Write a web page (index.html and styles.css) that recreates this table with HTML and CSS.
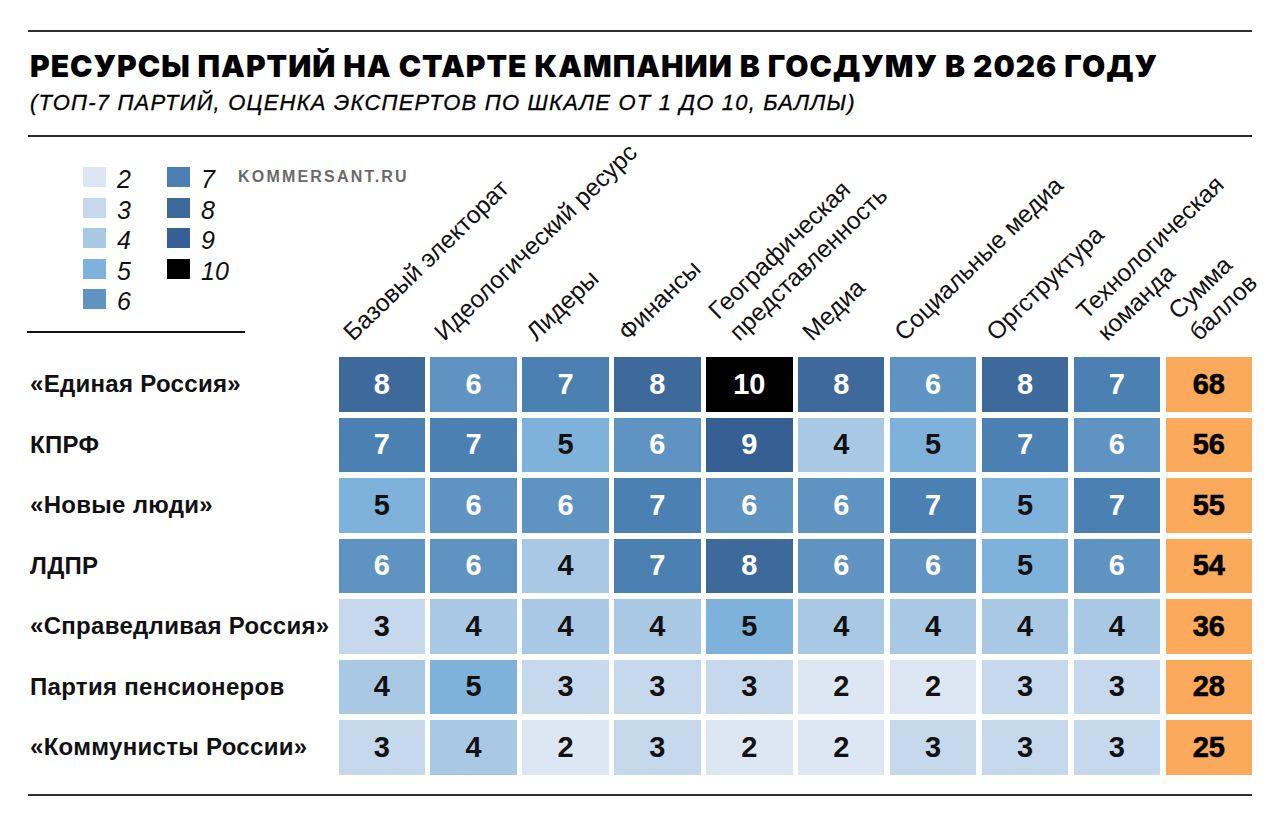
FILE: index.html
```html
<!DOCTYPE html>
<html lang="ru">
<head>
<meta charset="utf-8">
<title>Ресурсы партий</title>
<link rel="stylesheet" href="styles.css">
</head>
<body>
<div class="page">
  <div class="rule rule-top"></div>
  <h1 class="title">РЕСУРСЫ ПАРТИЙ НА СТАРТЕ КАМПАНИИ В ГОСДУМУ В 2026 ГОДУ</h1>
  <p class="subtitle">(ТОП-7 ПАРТИЙ, ОЦЕНКА ЭКСПЕРТОВ ПО ШКАЛЕ ОТ 1 ДО 10, БАЛЛЫ)</p>
  <div class="rule rule-mid"></div>

  <div class="grid head">
    <div class="legend-cell">
      <div class="legend-top">
        <div class="legend">
          <div class="lg-item"><span class="sw c2"></span><span class="lg-num">2</span></div>
          <div class="lg-item"><span class="sw c7"></span><span class="lg-num">7</span></div>
          <div class="lg-item"><span class="sw c3"></span><span class="lg-num">3</span></div>
          <div class="lg-item"><span class="sw c8"></span><span class="lg-num">8</span></div>
          <div class="lg-item"><span class="sw c4"></span><span class="lg-num">4</span></div>
          <div class="lg-item"><span class="sw c9"></span><span class="lg-num">9</span></div>
          <div class="lg-item"><span class="sw c5"></span><span class="lg-num">5</span></div>
          <div class="lg-item"><span class="sw c10"></span><span class="lg-num">10</span></div>
          <div class="lg-item"><span class="sw c6"></span><span class="lg-num">6</span></div>
        </div>
        <div class="brand">KOMMERSANT.RU</div>
      </div>
      <div class="legend-line"></div>
    </div>
    <div class="hd"><div class="hd-text">Базовый электорат</div></div>
    <div class="hd"><div class="hd-text">Идеологический ресурс</div></div>
    <div class="hd"><div class="hd-text">Лидеры</div></div>
    <div class="hd"><div class="hd-text">Финансы</div></div>
    <div class="hd hd-2"><div class="hd-text">Географическая<br>представленность</div></div>
    <div class="hd"><div class="hd-text">Медиа</div></div>
    <div class="hd"><div class="hd-text">Социальные медиа</div></div>
    <div class="hd"><div class="hd-text">Оргструктура</div></div>
    <div class="hd hd-2"><div class="hd-text">Технологическая<br>команда</div></div>
    <div class="hd hd-2"><div class="hd-text">Сумма<br>баллов</div></div>
  </div>

  <div class="grid body">
    <div class="label">«Единая Россия»</div>
    <div class="cell c8">8</div><div class="cell c6">6</div><div class="cell c7">7</div><div class="cell c8">8</div><div class="cell c10">10</div><div class="cell c8">8</div><div class="cell c6">6</div><div class="cell c8">8</div><div class="cell c7">7</div><div class="sum">68</div>

    <div class="label">КПРФ</div>
    <div class="cell c7">7</div><div class="cell c7">7</div><div class="cell c5">5</div><div class="cell c6">6</div><div class="cell c9">9</div><div class="cell c4">4</div><div class="cell c5">5</div><div class="cell c7">7</div><div class="cell c6">6</div><div class="sum">56</div>

    <div class="label">«Новые люди»</div>
    <div class="cell c5">5</div><div class="cell c6">6</div><div class="cell c6">6</div><div class="cell c7">7</div><div class="cell c6">6</div><div class="cell c6">6</div><div class="cell c7">7</div><div class="cell c5">5</div><div class="cell c7">7</div><div class="sum">55</div>

    <div class="label">ЛДПР</div>
    <div class="cell c6">6</div><div class="cell c6">6</div><div class="cell c4">4</div><div class="cell c7">7</div><div class="cell c8">8</div><div class="cell c6">6</div><div class="cell c6">6</div><div class="cell c5">5</div><div class="cell c6">6</div><div class="sum">54</div>

    <div class="label">«Справедливая Россия»</div>
    <div class="cell c3">3</div><div class="cell c4">4</div><div class="cell c4">4</div><div class="cell c4">4</div><div class="cell c5">5</div><div class="cell c4">4</div><div class="cell c4">4</div><div class="cell c4">4</div><div class="cell c4">4</div><div class="sum">36</div>

    <div class="label">Партия пенсионеров</div>
    <div class="cell c4">4</div><div class="cell c5">5</div><div class="cell c3">3</div><div class="cell c3">3</div><div class="cell c3">3</div><div class="cell c2">2</div><div class="cell c2">2</div><div class="cell c3">3</div><div class="cell c3">3</div><div class="sum">28</div>

    <div class="label">«Коммунисты России»</div>
    <div class="cell c3">3</div><div class="cell c4">4</div><div class="cell c2">2</div><div class="cell c3">3</div><div class="cell c2">2</div><div class="cell c2">2</div><div class="cell c3">3</div><div class="cell c3">3</div><div class="cell c3">3</div><div class="sum">25</div>
  </div>

  <div class="rule rule-bottom"></div>
</div>
</body>
</html>
```
FILE: styles.css
```css
body {
  margin: 0;
  background: #fff;
  color: #000;
  font-family: "Liberation Sans", Arial, sans-serif;
}

.page {
  padding: 30px 28px 0 28px;
}

.rule {
  background: #2e2e2e;
  height: 2px;
}

.title {
  margin: 16px 0 0 2px;
  font-family: Inter, "Liberation Sans", sans-serif;
  font-weight: 900;
  font-size: 30px;
  line-height: 36px;
  letter-spacing: 1px;
  white-space: nowrap;
}

.subtitle {
  margin: 6px 0 0 2px;
  font-family: "Liberation Sans Narrow", "Liberation Sans", sans-serif;
  font-style: italic;
  font-size: 22px;
  line-height: 26px;
  letter-spacing: 1.2px;
  white-space: nowrap;
  -webkit-text-stroke: 0.3px #000;
}

.rule-mid {
  margin-top: 19px;
}

.grid {
  display: grid;
  grid-template-columns: 305px repeat(10, 1fr);
  column-gap: 5.5px;
}

.head {
  height: 210px;
}

.legend-cell {
  padding-top: 30px;
  display: flex;
  flex-direction: column;
}

.legend-top {
  display: flex;
  align-items: flex-start;
  white-space: nowrap;
}

.legend {
  display: grid;
  grid-template-columns: 84px 71px;
  grid-auto-rows: 30.5px;
  margin-left: 55px;
}

.lg-item {
  display: flex;
  align-items: flex-start;
  gap: 11px;
}

.sw {
  width: 23px;
  height: 20px;
  flex: none;
}

.lg-num {
  font-family: "Liberation Sans Narrow", "Liberation Sans", sans-serif;
  font-style: italic;
  font-size: 25px;
  line-height: 20px;
  margin-top: 2px;
  color: #111;
}

.brand {
  font-family: "Liberation Sans", Arial, sans-serif;
  font-weight: 700;
  font-size: 16px;
  letter-spacing: 2.2px;
  color: #6a6a6a;
  line-height: 18px;
  margin-top: 1px;
}

.legend-line {
  width: 218px;
  height: 2px;
  background: #111;
  margin: 11px 0 0 -1px;
}

.hd {
  display: flex;
  align-items: flex-end;
  padding-left: 19px;
  min-width: 0;
}

.hd-2 {
  padding-left: 38px;
}

.hd-text {
  font-family: "Liberation Sans Narrow", "Liberation Sans", sans-serif;
  font-size: 24.5px;
  line-height: 30px;
  white-space: nowrap;
  transform-origin: 0 100%;
  transform: rotate(-44deg);
  color: #111;
}

.body {
  margin-top: 10px;
  grid-auto-rows: 54.5px;
  row-gap: 6px;
}

.label {
  display: flex;
  align-items: center;
  padding-left: 2px;
  font-family: "Liberation Sans Narrow", "Liberation Sans", sans-serif;
  font-weight: 700;
  font-size: 24px;
  letter-spacing: 0.3px;
  white-space: nowrap;
  color: #111;
}

.cell {
  display: flex;
  align-items: center;
  justify-content: center;
  font-family: "Liberation Sans Narrow", "Liberation Sans", sans-serif;
  font-weight: 700;
  font-size: 29px;
  color: #fff;
}

.sum {
  display: flex;
  align-items: center;
  justify-content: center;
  background: #fba95a;
  font-family: "Liberation Sans", Arial, sans-serif;
  font-weight: 700;
  font-size: 29px;
  -webkit-text-stroke: 0.6px #000;
  color: #000;
}

.c2 { background: #dce7f3; color: #111; }
.c3 { background: #c6d8eb; color: #111; }
.c4 { background: #a9c8e4; color: #111; }
.c5 { background: #7fb2da; color: #111; }
.c6 { background: #5f94c2; }
.c7 { background: #4a80b2; }
.c8 { background: #3e6a9b; }
.c9 { background: #365f94; }
.c10 { background: #000; }

.rule-bottom {
  margin-top: 19px;
}
```
